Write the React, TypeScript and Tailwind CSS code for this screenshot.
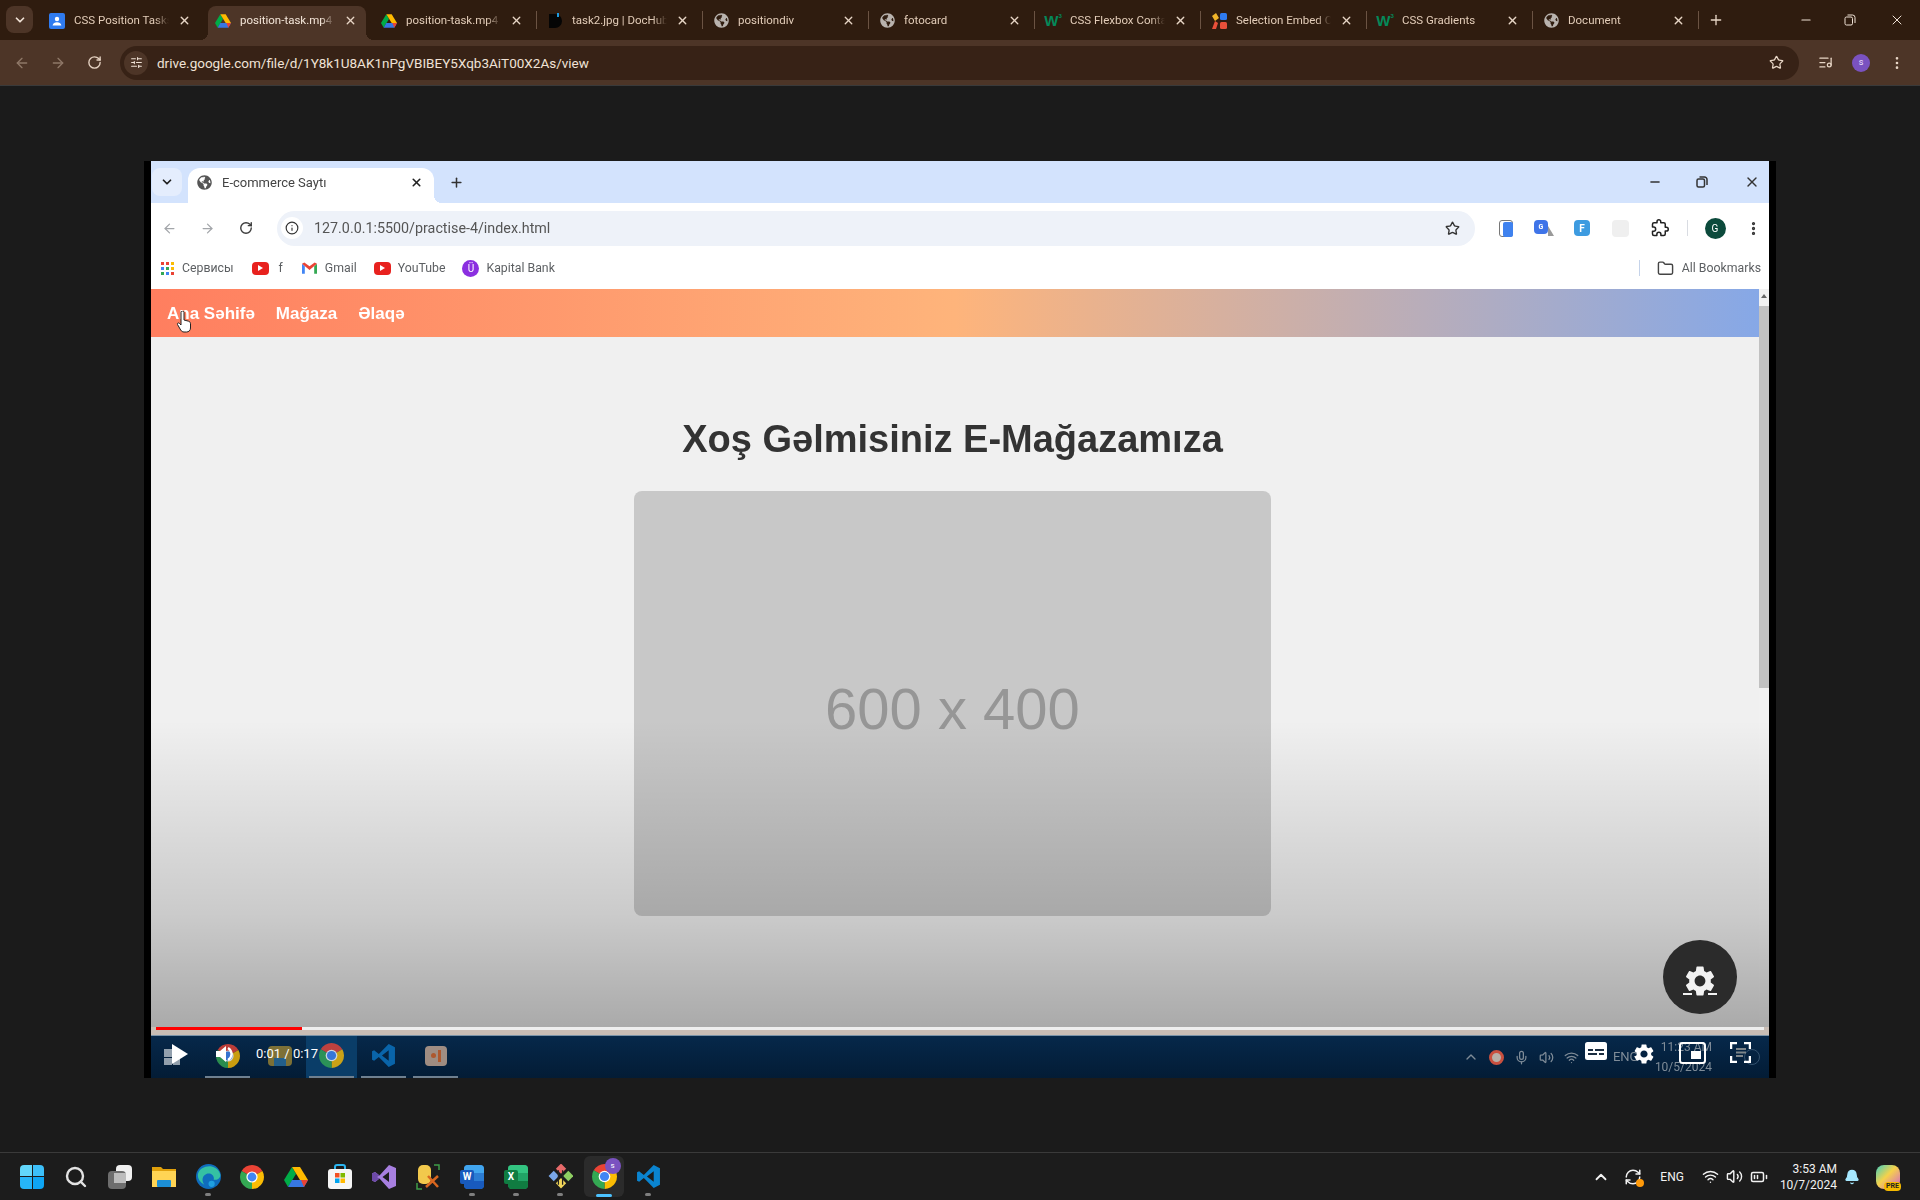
import { ReactNode } from "react";
import {
  ArrowLeft,
  ArrowRight,
  BatteryMedium,
  Bell,
  ChevronDown,
  ChevronUp,
  Folder,
  Info,
  ListMusic,
  Mic,
  Minus,
  MoreVertical,
  Plus,
  RefreshCw,
  RotateCw,
  Search,
  SlidersHorizontal,
  Star,
  Volume2,
  Wifi,
  X,
} from "lucide-react";
import { FaGlobeAmericas } from "react-icons/fa";
import { MdSettings } from "react-icons/md";

function ChromeLogo({ size = 24 }: { size?: number }) {
  return (
    <svg width={size} height={size} viewBox="0 0 24 24">
      <path d="M12 12 L22.39 6 A12 12 0 0 0 1.61 6 Z" fill="#ea4335" />
      <path d="M12 12 L12 24 A12 12 0 0 0 22.39 6 Z" fill="#fbbc04" />
      <path d="M12 12 L1.61 6 A12 12 0 0 0 12 24 Z" fill="#34a853" />
      <circle cx="12" cy="12" r="5.6" fill="#fff" />
      <circle cx="12" cy="12" r="4.4" fill="#4285f4" />
    </svg>
  );
}

function DriveLogo({ size = 16 }: { size?: number }) {
  return (
    <svg width={size} height={size} viewBox="0 0 24 22">
      <polygon points="8,1 12,8 4,21 0,14" fill="#00ac47" />
      <polygon points="8,1 16,1 24,14 16,14" fill="#ffba00" />
      <polygon points="4,21 8,14 24,14 20,21" fill="#3777e3" />
      <polygon points="17,14 24,14 20,21" fill="#ea4335" />
    </svg>
  );
}

function ContactsIcon() {
  return (
    <svg width="16" height="16" viewBox="0 0 16 16">
      <rect width="16" height="16" rx="2" fill="#2f7bf0" />
      <circle cx="8" cy="6" r="2.2" fill="#fff" />
      <path d="M3.6 12.5c.4-2.3 2.2-3.2 4.4-3.2s4 .9 4.4 3.2z" fill="#fff" />
    </svg>
  );
}

function DocHubIcon() {
  return (
    <svg width="14" height="16" viewBox="0 0 14 16">
      <path d="M1 1h6a6 6 0 0 1 0 14H1z" fill="#050505" />
      <path d="M9 0h2v4H9z" fill="#1c9be0" />
    </svg>
  );
}

function W3Icon() {
  return (
    <span className="flex h-4 w-4 items-start justify-center font-['Liberation_Sans',sans-serif] leading-none font-bold text-[#04895a]">
      <span className="text-[15px]">W</span>
      <span className="text-[6px]">3</span>
    </span>
  );
}

function EmbedIcon() {
  return (
    <svg width="15" height="16" viewBox="0 0 15 16">
      <path d="M0 3l4-3 3 5-4 3z" fill="#f0b429" />
      <path d="M0 16l3-8 3 2-2 6z" fill="#e8503a" />
      <rect x="8" y="0" width="7" height="7" rx="1.5" fill="#2f7bf0" />
      <rect x="8" y="9" width="7" height="7" rx="1.5" fill="#e8503a" />
    </svg>
  );
}

type Tab = { title: string; icon: ReactNode; active?: boolean };

const globe = <FaGlobeAmericas size={15} className="text-[#b9b3ae]" />;

const tabs: Tab[] = [
  { title: "CSS Position Tasks", icon: <ContactsIcon /> },
  { title: "position-task.mp4", icon: <DriveLogo />, active: true },
  { title: "position-task.mp4", icon: <DriveLogo /> },
  { title: "task2.jpg | DocHub", icon: <DocHubIcon /> },
  { title: "positiondiv", icon: globe },
  { title: "fotocard", icon: globe },
  { title: "CSS Flexbox Container", icon: <W3Icon /> },
  { title: "Selection Embed Options", icon: <EmbedIcon /> },
  { title: "CSS Gradients", icon: <W3Icon /> },
  { title: "Document", icon: globe },
];

function OuterTabs() {
  return (
    <div className="flex h-10 items-stretch bg-[#2f1c0f]">
      <div className="flex w-[38px] shrink-0 items-start pt-[6px] pl-[6px]">
        <div className="flex h-[27px] w-[27px] items-center justify-center rounded-lg bg-[#4d3527]">
          <ChevronDown size={14} strokeWidth={3} className="text-[#f0e2d6]" />
        </div>
      </div>
      {tabs.map((tab, i) => (
        <div
          key={i}
          className={`relative mt-[6px] flex shrink-0 items-center pb-[5px] ${
            tab.active ? "mx-[4px] w-[158px] rounded-t-lg bg-[#4d3527]" : "w-[166px]"
          }`}
        >
          {tab.active && (
            <>
              <span className="absolute bottom-0 -left-2 h-2 w-2 bg-[radial-gradient(circle_at_0_0,transparent_8px,#4d3527_8px)]" />
              <span className="absolute -right-2 bottom-0 h-2 w-2 bg-[radial-gradient(circle_at_100%_0,transparent_8px,#4d3527_8px)]" />
            </>
          )}
          <span className={`flex w-4 shrink-0 justify-center ${tab.active ? "ml-[7px]" : "ml-[11px]"}`}>{tab.icon}</span>
          <span
            className={`ml-[9px] w-[95px] overflow-hidden text-[11.5px] whitespace-nowrap [mask-image:linear-gradient(90deg,#000_85%,transparent)] ${
              tab.active ? "text-[#f3e5d8]" : "text-[#e3cdb9]"
            }`}
          >
            {tab.title}
          </span>
          <X size={13} strokeWidth={2.5} className="ml-[9px] shrink-0 text-[#e8d6c6]" />
          {!tab.active && i !== 0 && i !== 2 && (
            <span className="absolute top-[5px] left-0 h-[18px] w-px bg-[#6b5343]" />
          )}
        </div>
      ))}
      <span className="relative mt-[6px] h-[18px] w-px translate-y-[5px] bg-[#6b5343]" />
      <div className="ml-[9px] flex items-center pb-[1px]">
        <Plus size={16} className="text-[#e8d6c6]" />
      </div>
      <div className="ml-auto flex items-center text-[#f0e2d6]">
        <Minus size={14} className="mr-[31px]" />
        <svg width="12" height="12" viewBox="0 0 12 12" fill="none" stroke="currentColor" className="mr-[33px]">
          <rect x="1" y="3" width="7.5" height="8" rx="1.5" />
          <path d="M3.5 1h5A2.5 2.5 0 0 1 11 3.5V9" />
        </svg>
        <X size={16} className="mr-[15px]" strokeWidth={1.5} />
      </div>
    </div>
  );
}

function OuterToolbar() {
  return (
    <div className="flex h-[46px] items-center border-b border-[#3a3a3a] bg-[#4d3527] pl-[14px]">
      <ArrowLeft size={16} className="text-[#8f7868]" />
      <ArrowRight size={16} className="ml-[20px] text-[#8f7868]" />
      <RotateCw size={15} strokeWidth={2.2} className="ml-[21px] text-[#e5d2c2]" />
      <div className="ml-[18px] flex h-[34px] w-[1679px] items-center rounded-full bg-[#372216] pl-[4px]">
        <span className="flex h-6 w-6 items-center justify-center rounded-full bg-[#4d3527]">
          <SlidersHorizontal size={13} className="text-[#f0e2d6]" />
        </span>
        <span className="ml-[9px] pt-[1px] text-[13.5px] text-[#f0e2d6]">drive.google.com/file/d/1Y8k1U8AK1nPgVBIBEY5Xqb3AiT00X2As/view</span>
        <Star size={15} className="mr-[15px] ml-auto text-[#e8d6c6]" />
      </div>
      <ListMusic size={15} className="ml-[19px] text-[#e8d6c6]" />
      <span className="ml-[19px] flex h-[18px] w-[18px] items-center justify-center rounded-full bg-[#7a52c0] text-[9px] text-[#f0e6ff]">
        s
      </span>
      <MoreVertical size={16} className="ml-[19px] text-[#e8d6c6]" />
    </div>
  );
}

function InnerTabs() {
  return (
    <div className="flex h-[42px] shrink-0 items-stretch bg-[#d3e3fd]">
      <div className="mt-[7px] ml-[1px] flex h-[28px] w-[30px] items-center justify-center rounded-lg bg-[#e4edfd]">
        <ChevronDown size={14} strokeWidth={3} className="text-[#1f1f1f]" />
      </div>
      <div className="relative mt-[7px] ml-[6px] flex w-[246px] items-center rounded-t-xl bg-white pb-[6px] pl-[9px]">
        <span className="absolute -right-2 bottom-0 h-2 w-2 bg-[radial-gradient(circle_at_100%_0,transparent_8px,#fff_8px)]" />
        <FaGlobeAmericas size={15} className="text-[#555]" />
        <span className="ml-[10px] text-[13px] whitespace-nowrap text-[#444]">E-commerce Saytı</span>
        <X size={13} strokeWidth={3} className="mr-[11px] ml-auto text-[#222]" />
      </div>
      <div className="ml-[15px] flex items-center">
        <Plus size={15} strokeWidth={2.4} className="text-[#333]" />
      </div>
      <div className="ml-auto flex items-center text-[#333]">
        <Minus size={14} strokeWidth={2.4} className="mr-[34px]" />
        <svg width="12" height="12" viewBox="0 0 12 12" fill="none" stroke="currentColor" strokeWidth="1.5" className="mr-[36px]">
          <rect x="1" y="3" width="7.5" height="8" rx="1.5" />
          <path d="M3.5 1h5A2.5 2.5 0 0 1 11 3.5V9" />
        </svg>
        <X size={16} strokeWidth={2} className="mr-[9px]" />
      </div>
    </div>
  );
}

function InnerToolbar() {
  return (
    <div className="flex h-[45px] shrink-0 items-center bg-white pt-[5px] pl-[11px]">
      <ArrowLeft size={15} className="text-[#a3a6aa]" />
      <ArrowRight size={15} className="ml-[23px] text-[#a3a6aa]" />
      <RotateCw size={14} strokeWidth={2.4} className="ml-[24px] text-[#3c3c3c]" />
      <div className="ml-[24px] flex h-[35px] w-[1198px] shrink-0 items-center rounded-full bg-[#eef2f9] pl-[4px]">
        <span className="flex h-[22px] w-[22px] items-center justify-center rounded-full bg-white">
          <Info size={14} className="text-[#333]" />
        </span>
        <span className="ml-[11px] pt-[1px] text-[14.3px] text-[#555]">127.0.0.1:5500/practise-4/index.html</span>
        <Star size={15} strokeWidth={2.2} className="mr-[15px] ml-auto text-[#333]" />
      </div>
      <div className="ml-[12px] flex shrink-0 items-center">
        <span className="flex w-[38px] justify-center">
          <span className="relative block h-[17px] w-[14px] rounded-[3px] border border-[#777] bg-white">
            <span className="absolute top-[1px] right-[-1px] bottom-[-1px] left-[3px] rounded-[2px] bg-[#3f82ef]" />
          </span>
        </span>
        <span className="flex w-[38px] justify-center">
          <span className="flex h-[14px] w-[14px] items-center justify-center rounded-sm bg-[#3f74e8] text-[7px] font-bold text-white">G</span>
          <span className="mt-[6px] h-[10px] w-[6px] bg-[#9a9a9a] [clip-path:polygon(0_0,100%_100%,0_100%)]" />
        </span>
        <span className="flex w-[38px] justify-center">
          <span className="flex h-[16px] w-[16px] items-center justify-center rounded-sm bg-[#3d9be0] text-[10px] font-bold text-white">F</span>
        </span>
        <span className="flex w-[38px] justify-center">
          <span className="h-[17px] w-[17px] rounded-sm bg-[#efefef]" />
        </span>
        <span className="ml-[2px] flex w-[38px] justify-center">
          <svg width="18" height="18" viewBox="0 0 24 24" fill="none" stroke="#222" strokeWidth="2" strokeLinejoin="round">
            <path d="M20.5 11H19V7a2 2 0 0 0-2-2h-4V3.500a2.500 2.500 0 0 0-5 0V5H4a2 2 0 0 0-2 2v3.800h1.500a2.700 2.700 0 0 1 0 5.400H2V20a2 2 0 0 0 2 2h3.800v-1.500a2.700 2.700 0 0 1 5.400 0V22H17a2 2 0 0 0 2-2v-4h1.500a2.500 2.500 0 0 0 0-5z" />
          </svg>
        </span>
        <span className="ml-[8px] h-[16px] w-px bg-[#d9dce2]" />
        <span className="ml-[8px] flex w-[38px] justify-center">
          <span className="flex h-[21px] w-[21px] items-center justify-center rounded-full bg-[#0c4a3c] text-[10px] text-white">G</span>
        </span>
        <span className="ml-[3px] flex w-[32px] justify-center">
          <MoreVertical size={17} strokeWidth={2.6} className="text-[#333]" />
        </span>
      </div>
    </div>
  );
}

function YtMark() {
  return (
    <span className="flex h-[13px] w-[17px] items-center justify-center rounded-[4px] bg-[#e8211e]">
      <span className="h-0 w-0 border-y-[3px] border-l-[5px] border-y-transparent border-l-white" />
    </span>
  );
}

function AppsGrid() {
  const colors = ["#ea4335", "#ea4335", "#fbbc04", "#4285f4", "#34a853", "#fbbc04", "#34a853", "#4285f4", "#ea4335"];
  return (
    <span className="grid h-[13px] w-[13px] grid-cols-3 gap-[2px]">
      {colors.map((c, i) => (
        <span key={i} className="h-[3px] w-[3px]" style={{ background: c }} />
      ))}
    </span>
  );
}

function Bookmarks() {
  return (
    <div className="flex h-[41px] shrink-0 items-center bg-white pb-[1px] pl-[10px] text-[12.3px] text-[#5c5f62]">
      <AppsGrid />
      <span className="ml-[8px]">Сервисы</span>
      <span className="ml-[18px]"><YtMark /></span>
      <span className="ml-[10px]">f</span>
      <svg width="15" height="12" viewBox="0 0 16 12" className="ml-[19px]">
        <path d="M0 1.5V12h3V4z" fill="#4285f4" />
        <path d="M16 1.5V12h-3V4z" fill="#34a853" />
        <path d="M0 1.5 8 8l8-6.5L13.5 0 8 4 2.500 0z" fill="#ea4335" />
      </svg>
      <span className="ml-[8px]">Gmail</span>
      <span className="ml-[17px]"><YtMark /></span>
      <span className="ml-[7px]">YouTube</span>
      <span className="ml-[17px] flex h-[17px] w-[17px] items-center justify-center rounded-full bg-[#8b2fe0] text-[10px] text-white">Ü</span>
      <span className="ml-[7px]">Kapital Bank</span>
      <div className="ml-auto flex items-center">
        <span className="h-[16px] w-px bg-[#c5d3ea]" />
        <Folder size={17} className="ml-[17px] text-[#444]" />
        <span className="mr-[8px] ml-[8px]">All Bookmarks</span>
      </div>
    </div>
  );
}

function Page() {
  return (
    <div className="flex min-h-0 flex-1">
      <div className="flex flex-1 flex-col bg-[#f0f0f0]">
        <nav className="flex h-[48px] shrink-0 items-center gap-[21px] bg-[linear-gradient(90deg,#ff7e5f,#feb47b_50%,#86a8e7)] pt-[2px] pl-[16px] font-['Liberation_Sans',sans-serif] text-[17px] font-bold text-white">
          <a>Ana Səhifə</a>
          <a>Mağaza</a>
          <a>Əlaqə</a>
        </nav>
        <main className="flex flex-col items-center pt-[82px] pr-[5px] font-['Liberation_Sans',sans-serif]">
          <h1 className="text-[38px] leading-[41px] font-bold text-[#333]">Xoş Gəlmisiniz E-Mağazamıza</h1>
          <div className="mt-[31px] flex h-[425px] w-[637px] items-center justify-center rounded-lg bg-[#c8c8c8] pt-[10px]">
            <span className="text-[58px] text-[#969696]">600 x 400</span>
          </div>
        </main>
      </div>
      <div className="flex w-[10px] shrink-0 flex-col bg-[#f1f1f1]">
        <span className="mx-auto mt-[5px] h-0 w-0 border-x-[3px] border-b-[4px] border-x-transparent border-b-[#666]" />
        <span className="mt-[8px] h-[382px] bg-[#c1c1c1]" />
      </div>
    </div>
  );
}

function DimTaskbar() {
  const apps = [
    { icon: <ChromeLogo size={24} />, line: true, active: false },
    {
      icon: (
        <span className="flex h-[20px] w-[24px] items-end justify-center rounded-sm bg-[#9c8434]">
          <span className="h-[8px] w-[12px] bg-[#2b6f9e]" />
        </span>
      ),
      line: false,
      active: false,
    },
    { icon: <ChromeLogo size={25} />, line: true, active: true },
    { icon: <VsCodeLogo size={25} color="#0b75c4" />, line: true, active: false },
    {
      icon: (
        <span className="flex h-[20px] w-[22px] items-center justify-center gap-[2px] rounded-sm bg-[#c6a893]">
          <span className="h-[5px] w-[5px] rounded-full bg-[#d9662a]" />
          <span className="h-[12px] w-[3px] bg-[#d9662a]" />
        </span>
      ),
      line: true,
      active: false,
    },
  ];
  return (
    <div className="flex h-[43px] shrink-0 items-stretch border-t border-[#7a93a8] bg-[linear-gradient(180deg,#06284a,#031c35)]">
      <div className="flex w-[50px] items-center pl-[13px]">
        <span className="grid h-[16px] w-[16px] grid-cols-2 gap-[1px] opacity-70">
          <span className="bg-[#cfd6dc]" />
          <span className="bg-[#cfd6dc]" />
          <span className="bg-[#cfd6dc]" />
          <span className="bg-[#cfd6dc]" />
        </span>
      </div>
      {apps.map((a, i) => (
        <div key={i} className={`relative ml-[1px] flex w-[51px] items-center justify-center pb-[3px] ${a.active ? "bg-[#0a3d68]" : ""}`}>
          <span className="opacity-80">{a.icon}</span>
          {a.line && <span className="absolute right-[3px] bottom-0 left-[3px] h-[2px] bg-[#6f8090]" />}
        </div>
      ))}
      <div className="ml-auto flex items-center text-[#7f8c98]">
        <ChevronUp size={16} className="mr-[10px]" />
        <span className="mr-[10px] h-[15px] w-[15px] rounded-full border-[3px] border-[#c9503f] bg-[#b8b0a8]" />
        <Mic size={15} className="mr-[10px]" />
        <Volume2 size={15} className="mr-[10px]" />
        <Wifi size={15} className="mr-[34px]" />
        <span className="w-[42px] text-[13px]">ENG</span>
        <span className="text-right text-[12px] leading-[20px] whitespace-nowrap">
          11:23 AM
          <br />
          10/5/2024
        </span>
        <span className="mr-[9px] ml-[32px] h-[16px] w-[16px] rounded-full border border-[#33516e]" />
      </div>
    </div>
  );
}

function VideoControls() {
  return (
    <>
      <div className="absolute inset-x-[7px] top-[559px] bottom-[43px] bg-[linear-gradient(180deg,transparent,rgba(0,0,0,0.155)_62%,rgba(0,0,0,0.3)_100%)]" />
      <div className="absolute inset-x-[7px] bottom-[43px] h-[8px] bg-[#c9bdb5] px-[5px]">
        <div className="flex h-[3px] bg-[#eeeeee]">
          <div className="w-[146px] bg-[#ff0000]" />
        </div>
      </div>
      <div className="absolute inset-x-[7px] bottom-0 flex h-[43px] items-center pb-[5px] text-white">
        <span className="flex w-12 justify-center pl-[10px]">
          <svg width="16" height="20" viewBox="0 0 16 20">
            <path d="M0 0 16 10 0 20z" fill="#fff" />
          </svg>
        </span>
        <span className="ml-[2px] flex w-12 justify-center">
          <svg width="20" height="20" viewBox="0 0 20 20" fill="#fff">
            <path d="M1 7h4l6-5v16l-6-5H1z" />
            <path d="M13 4c2.500 1.500 3.500 3.700 3.500 6s-1 4.500-3.500 6" fill="none" stroke="#fff" strokeWidth="2.200" />
          </svg>
        </span>
        <span className="ml-[7px] font-['Roboto',sans-serif] text-[13px]">0:01 / 0:17</span>
        <div className="mr-[5px] ml-auto flex">
          <span className="flex w-12 justify-center">
            <svg width="22" height="18" viewBox="0 0 22 18">
              <rect width="22" height="18" rx="2.500" fill="#fff" />
              <path d="M3 8h5M10 8h9M3 12h9M14 12h5" stroke="#1a2c40" strokeWidth="1.800" />
            </svg>
          </span>
          <span className="flex w-12 justify-center">
            <MdSettings size={24} />
          </span>
          <span className="flex w-12 justify-center">
            <svg width="27" height="22" viewBox="0 0 27 22" fill="none">
              <rect x="1" y="1" width="25" height="20" rx="2.500" stroke="#fff" strokeWidth="2" />
              <rect x="12" y="9" width="10" height="8" fill="#fff" />
            </svg>
          </span>
          <span className="flex w-12 justify-center">
            <svg width="21" height="21" viewBox="0 0 21 21" fill="none" stroke="#fff" strokeWidth="2.500">
              <path d="M1 7V1h6M14 1h6v6M20 14v6h-6M7 20H1v-6" />
              <path d="M6 7h10M6 10.500h10M6 14h7" stroke="#7d858a" strokeWidth="2" />
            </svg>
          </span>
        </div>
      </div>
      <div className="absolute top-[779px] right-[39px] flex h-[74px] w-[74px] flex-col items-center justify-center rounded-full bg-[#2b2b2b] pt-[3px] text-[#f2f2f2]">
        <MdSettings size={36} />
        <span className="mt-[-6px] flex w-[34px] justify-between">
          <span className="h-[2px] w-[9px] bg-[#f2f2f2]" />
          <span className="h-[2px] w-[9px] bg-[#f2f2f2]" />
        </span>
      </div>
      <svg width="16" height="22" viewBox="0 0 16 22" className="absolute top-[150px] left-[32px]">
        <path d="M5 1.500a1.500 1.500 0 0 1 3 0V9l4.500 1.200c1.300.4 2 1.300 2 2.500V17c0 2.500-1.800 4-4 4H8c-1.500 0-2.500-.7-3.300-2L1.500 13.500c-.6-1 .8-2.200 1.800-1.200L5 14z" fill="#fff" stroke="#222" strokeWidth="1" />
      </svg>
    </>
  );
}

function VsCodeLogo({ size, color }: { size: number; color: string }) {
  return (
    <svg width={size} height={size} viewBox="0 0 24 24">
      <path fillRule="evenodd" d="M17 1 7.500 10.500 3 7 1 8v8l2 1 4.500-3.500L17 23l6-3V4zM17 7v10l-6.500-5z" fill={color} />
    </svg>
  );
}

function VsLogo() {
  return (
    <svg width="24" height="26" viewBox="0 0 24 24">
      <path fillRule="evenodd" d="M17 0 7.500 10.500 3 7 0 8.500v7L3 17l4.500-3.500L17 24l7-3V3zM17 7v10l-6.500-5z" fill="#a77fe0" />
      <path d="M0 8.500 3 7l4.500 3.500L5 12l2.500 1.500L3 17l-3-1.500z" fill="#6d4aa8" />
    </svg>
  );
}

function StartIcon() {
  return (
    <span className="grid h-[24px] w-[24px] grid-cols-2 gap-[1px]">
      <span className="rounded-tl-sm bg-[#62d7fb]" />
      <span className="rounded-tr-sm bg-[#3cc0fa]" />
      <span className="rounded-bl-sm bg-[#26b5f8]" />
      <span className="rounded-br-sm bg-[#0ea5f4]" />
    </span>
  );
}

function OfficeTile({ letter, dark, light, mid }: { letter: string; dark: string; light: string; mid: string }) {
  return (
    <span className="relative flex h-[24px] w-[24px] justify-end">
      <span className="flex h-full w-[20px] flex-col overflow-hidden rounded-sm" style={{ background: mid }}>
        <span className="h-1/3" style={{ background: light }} />
        <span className="h-1/3" style={{ background: mid }} />
        <span className="h-1/3" style={{ background: dark }} />
      </span>
      <span className="absolute top-[5px] left-0 flex h-[14px] w-[14px] items-center justify-center rounded-[2px] text-[10px] font-bold text-white" style={{ background: dark }}>
        {letter}
      </span>
    </span>
  );
}

function MainTaskbar() {
  const items: { icon: ReactNode; dot?: boolean; active?: boolean }[] = [
    { icon: <StartIcon /> },
    { icon: <Search size={24} strokeWidth={2.4} className="text-[#e2e2e2]" /> },
    {
      icon: (
        <span className="relative block h-[24px] w-[24px]">
          <span className="absolute top-0 right-0 h-[16px] w-[16px] rounded-sm bg-[#f0f0f0]" />
          <span className="absolute bottom-0 left-0 h-[18px] w-[18px] rounded-sm bg-[#6e6e6e]" />
          <span className="absolute top-[8px] left-[6px] h-[10px] w-[12px] bg-[#bdbdbd]" />
        </span>
      ),
    },
    {
      icon: (
        <svg width="24" height="24" viewBox="0 0 24 24">
          <path d="M0 2h9l2 2h13v18H0z" fill="#e0a00b" />
          <path d="M0 6h24v16H0z" fill="#ffd454" />
          <rect x="5" y="15" width="14" height="7" rx="1" fill="#1c8fd6" />
        </svg>
      ),
    },
    {
      dot: true,
      icon: (
        <svg width="25" height="25" viewBox="0 0 24 24">
          <circle cx="12" cy="12" r="12" fill="#0f6cbd" />
          <path d="M2 9C4 2 18-2 23 9c1.500 4-2 7-6 6 1-4-3-7-7-5.500C6 11 5 16 8 20 3 17 1 13 2 9z" fill="#35c1a3" />
          <circle cx="15" cy="19" r="3" fill="#1fa0e0" />
        </svg>
      ),
    },
    { icon: <ChromeLogo size={24} /> },
    { icon: <DriveLogo size={24} /> },
    {
      icon: (
        <svg width="24" height="25" viewBox="0 0 24 25">
          <path d="M7 6V3a2 2 0 0 1 2-2h6a2 2 0 0 1 2 2v3" fill="none" stroke="#2bb5f0" strokeWidth="2" />
          <rect x="0" y="5" width="24" height="20" rx="3" fill="#f5f5f5" />
          <rect x="7" y="9" width="4.500" height="4.500" fill="#f25022" />
          <rect x="12.500" y="9" width="4.500" height="4.500" fill="#7fba00" />
          <rect x="7" y="14.500" width="4.500" height="4.500" fill="#00a4ef" />
          <rect x="12.500" y="14.500" width="4.500" height="4.500" fill="#ffb900" />
        </svg>
      ),
    },
    { icon: <VsLogo /> },
    {
      icon: (
        <svg width="24" height="26" viewBox="0 0 24 26">
          <rect x="2" y="1" width="13" height="19" rx="5" fill="#f2c94c" />
          <path d="M18 1h5v5M1 19v6h5" fill="none" stroke="#3e9c47" strokeWidth="1.500" />
          <path d="M10 23 22 12M12 12l10 11" stroke="#d9661f" strokeWidth="2.500" />
        </svg>
      ),
    },
    { dot: true, icon: <OfficeTile letter="W" dark="#185abd" mid="#2b7cd3" light="#41a5ee" /> },
    { dot: true, icon: <OfficeTile letter="X" dark="#107c41" mid="#21a366" light="#33c481" /> },
    {
      dot: true,
      icon: (
        <svg width="25" height="25" viewBox="0 0 24 24">
          <rect x="9" y="1" width="7" height="7" transform="rotate(45 12.500 4.500)" fill="#e66a6a" />
          <rect x="2" y="8" width="7" height="7" transform="rotate(45 5.500 11.500)" fill="#7aa7ea" />
          <rect x="16" y="8" width="7" height="7" transform="rotate(45 19.500 11.500)" fill="#8fcf63" />
          <rect x="9" y="15" width="7" height="7" transform="rotate(45 12.500 18.500)" fill="#f3d75a" />
          <path d="M10 6v14M14 6v14" stroke="#222" strokeWidth="1.200" />
        </svg>
      ),
    },
    {
      active: true,
      icon: (
        <span className="relative block">
          <ChromeLogo size={25} />
          <span className="absolute -top-[6px] -right-[4px] flex h-[16px] w-[16px] items-center justify-center rounded-full bg-[#7a52c0] text-[8px] text-white">s</span>
        </span>
      ),
    },
    { dot: true, icon: <VsCodeLogo size={25} color="#0a84d0" /> },
  ];
  return (
    <div className="flex h-[48px] shrink-0 items-stretch border-t border-[#3a3a3a] bg-[#1c1c1c]">
      <div className="flex pl-[10px]">
        {items.map((item, i) => (
          <div key={i} className="relative flex w-[44px] items-center justify-center pt-[1px] pb-[1px]">
            {item.active && <span className="absolute inset-x-[2px] top-[3px] bottom-[3px] rounded-md bg-[#2b2b2b]" />}
            <span className="relative">{item.icon}</span>
            {item.dot && <span className="absolute bottom-[4px] h-[3px] w-[6px] rounded-full bg-[#7f7f7f]" />}
            {item.active && <span className="absolute bottom-[3px] h-[3px] w-[16px] rounded-full bg-[#4cc2ff]" />}
          </div>
        ))}
      </div>
      <div className="ml-auto flex items-center text-[#f2f2f2]">
        <ChevronUp size={18} strokeWidth={2.4} className="mr-[14px]" />
        <span className="relative mr-[18px]">
          <RefreshCw size={18} />
          <span className="absolute right-[-2px] bottom-[-1px] h-[8px] w-[8px] rounded-full bg-[#ff9a0a]" />
        </span>
        <span className="mr-[18px] text-[12px]">ENG</span>
        <Wifi size={17} className="mr-[7px]" />
        <Volume2 size={17} className="mr-[7px]" />
        <BatteryMedium size={18} className="mr-[12px]" />
        <span className="text-right text-[12px] leading-[16px]">
          3:53 AM
          <br />
          10/7/2024
        </span>
        <Bell size={16} fill="#a6e8ff" className="mr-[6px] ml-[7px] text-[#a6e8ff]" />
        <span className="relative mr-[20px] ml-[10px] block h-[24px] w-[24px]">
          <span className="absolute inset-0 rounded-lg bg-[linear-gradient(135deg,#3fd0c0,#f6d24a_45%,#d060d0)]" />
          <span className="absolute right-[-1px] bottom-[-2px] rounded-sm bg-[#f5b900] px-[2px] text-[7px] leading-[9px] font-bold text-[#222]">PRE</span>
        </span>
      </div>
    </div>
  );
}

export default function App() {
  return (
    <div className="flex h-[1200px] w-[1920px] flex-col overflow-hidden bg-[#1b1b1b] font-['Roboto',sans-serif]">
      <OuterTabs />
      <OuterToolbar />
      <div className="flex-1 pt-[75px] pl-[144px]">
        <div className="relative h-[917px] w-[1632px] overflow-hidden bg-black px-[7px]">
          <div className="flex h-full flex-col blur-[0.5px]">
            <InnerTabs />
            <InnerToolbar />
            <Bookmarks />
            <Page />
            <DimTaskbar />
          </div>
          <VideoControls />
        </div>
      </div>
      <MainTaskbar />
    </div>
  );
}
